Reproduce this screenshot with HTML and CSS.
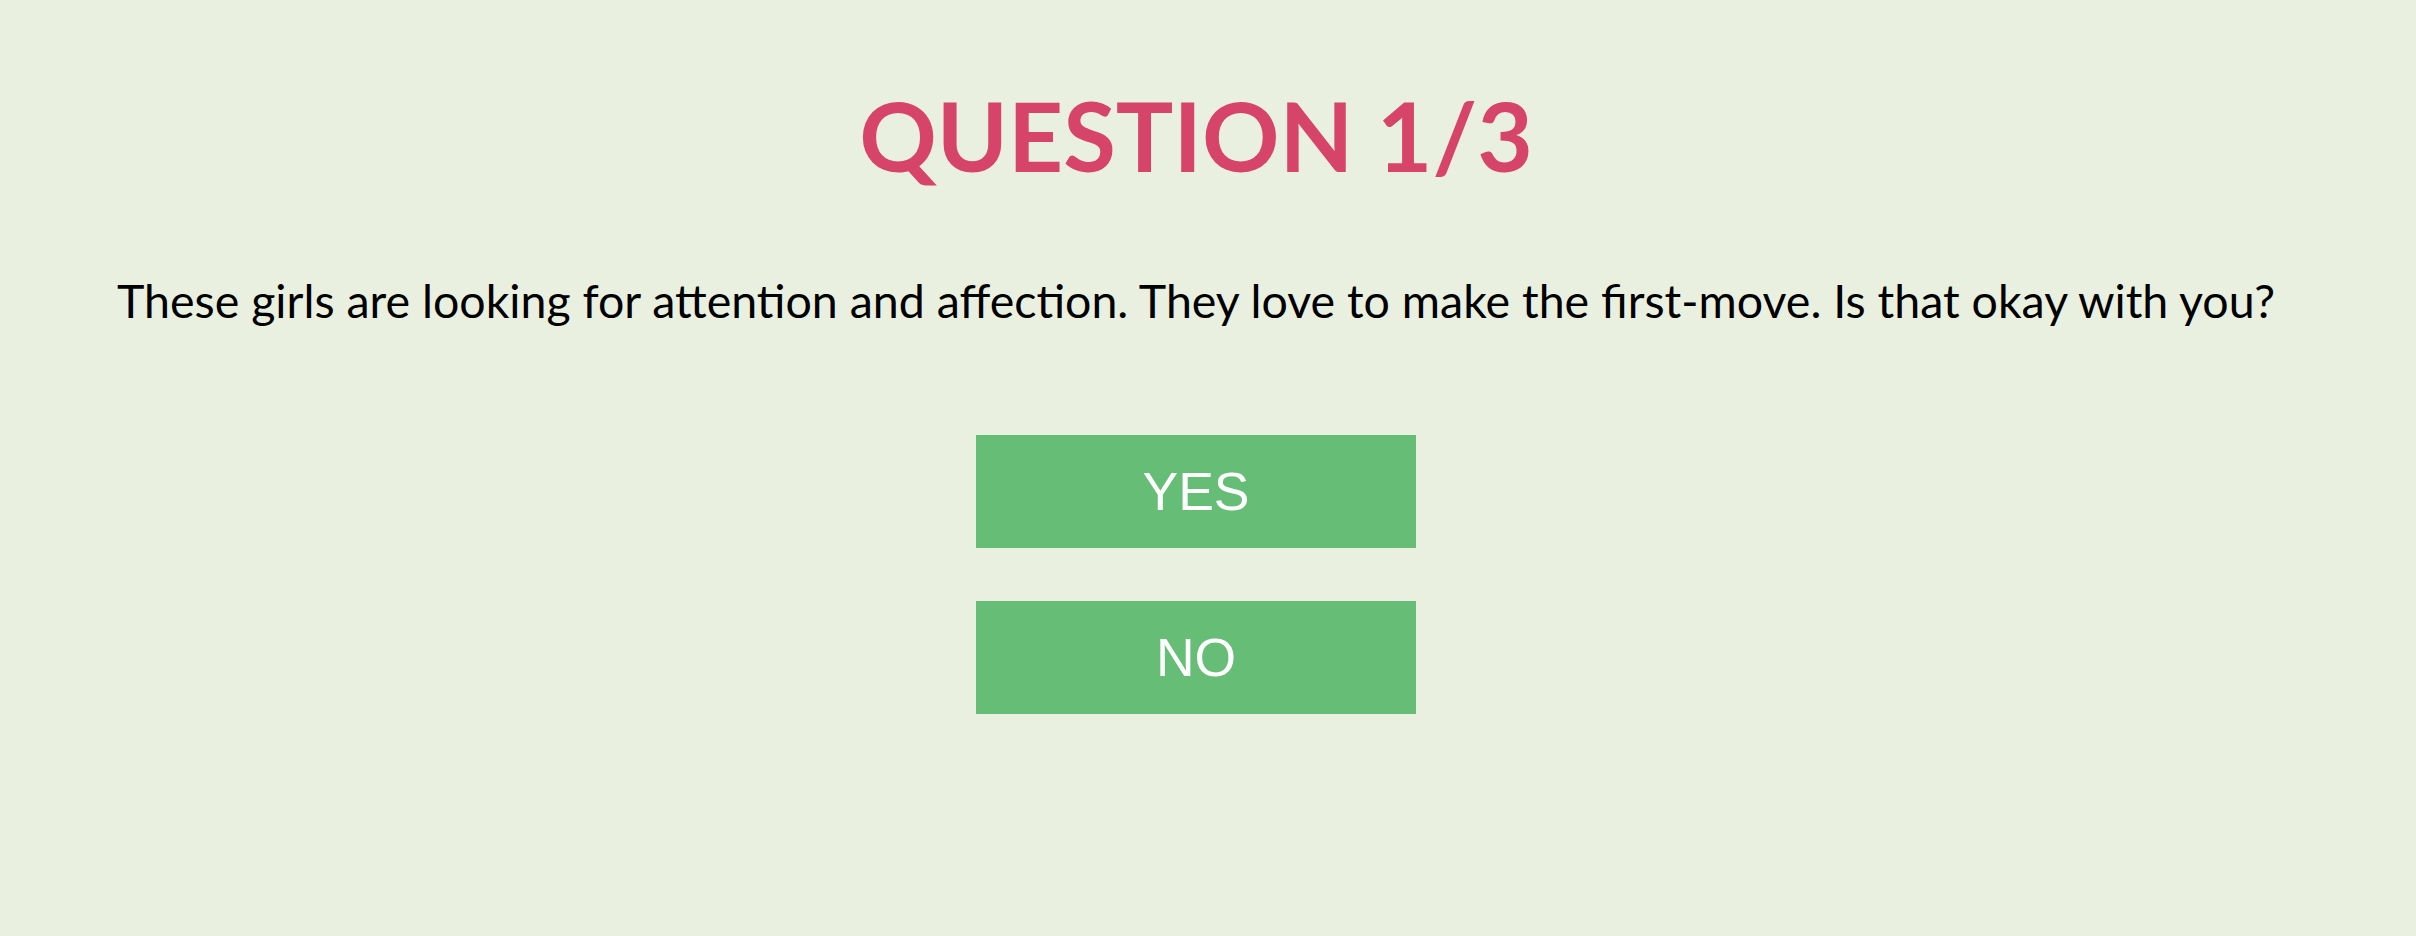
FILE: index.html
```html
<!DOCTYPE html>
<html lang="en">
<head>
<meta charset="utf-8">
<title>Question 1/3</title>
<link rel="stylesheet" href="styles.css">
</head>
<body>
<main class="quiz">
  <h1 class="quiz-title">QUESTION 1/3</h1>
  <p class="quiz-question">These girls are looking for attention and affection. They love to make the first-move. Is that okay with you?</p>
  <div class="quiz-answers">
    <button class="answer" type="button">YES</button>
    <button class="answer" type="button">NO</button>
  </div>
</main>
</body>
</html>
```
FILE: styles.css
```css
html, body {
  margin: 0;
  padding: 0;
  background: #e9f0e0;
}

.quiz {
  display: flex;
  flex-direction: column;
  align-items: center;
  padding: 77px 24px 0 0;
  min-height: 936px;
  box-sizing: border-box;
}

.quiz-title {
  margin: 0;
  font-family: "Lato", "Open Sans", sans-serif;
  font-weight: 700;
  font-size: 96px;
  line-height: 1.2;
  color: #d6446a;
  letter-spacing: 0;
}

.quiz-question {
  margin: 81px 0 0;
  font-family: "Lato", "Open Sans", sans-serif;
  font-weight: 400;
  font-size: 46.5px;
  line-height: 1.2;
  color: #000;
  text-align: center;
  white-space: nowrap;
}

.quiz-answers {
  display: flex;
  flex-direction: column;
  gap: 53px;
  margin-top: 106px;
}

.answer {
  width: 440px;
  height: 113px;
  border: 0;
  border-radius: 0;
  padding: 0;
  background: #66bd76;
  color: #fff;
  font-family: "Liberation Sans", Arial, sans-serif;
  font-size: 53.5px;
  line-height: 1;
  cursor: pointer;
}
```
